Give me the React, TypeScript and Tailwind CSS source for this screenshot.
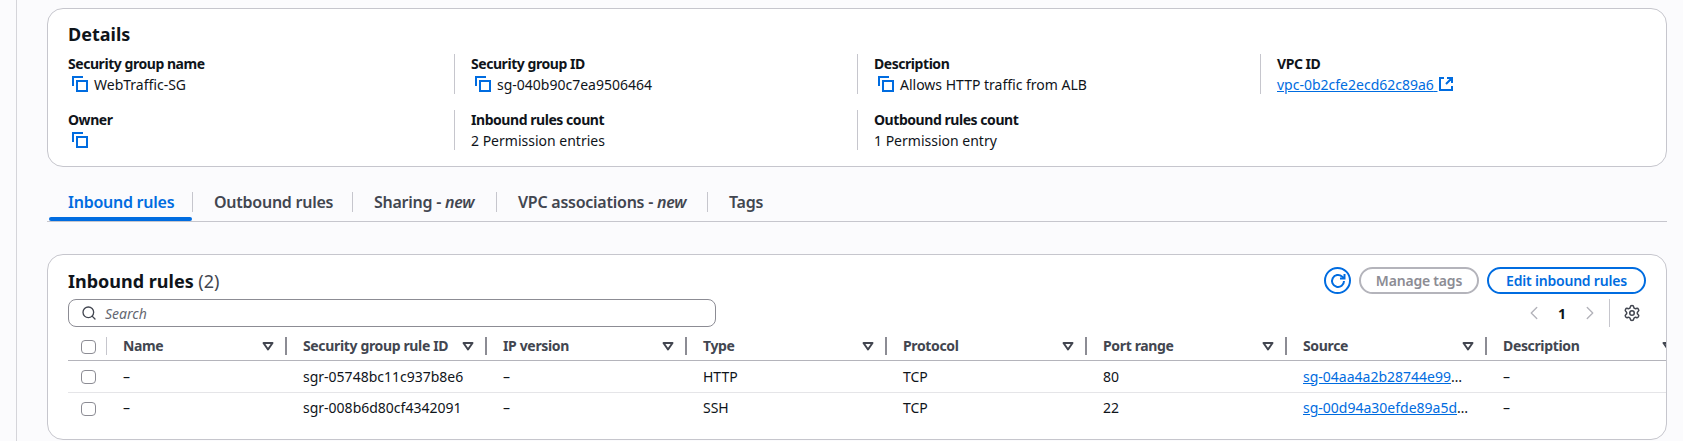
import { Search, Settings, ChevronLeft, ChevronRight } from "lucide-react";

const CopyIcon = () => (
  <svg viewBox="0 0 16 16" className="w-4 h-4 shrink-0" fill="none" stroke="#006ce0" strokeWidth="2">
    <path d="M1 10V1h10" />
    <rect x="5" y="5" width="10" height="10" />
  </svg>
);

const FilterIcon = () => (
  <svg viewBox="0 0 16 16" className="w-4 h-4 shrink-0" fill="none" stroke="#424650" strokeWidth="2" strokeLinejoin="round">
    <path d="M3.5 5h9L8 11.5z" />
  </svg>
);

const ExternalIcon = () => (
  <svg viewBox="0 0 16 16" className="w-4 h-4 shrink-0" fill="none" stroke="#006ce0" strokeWidth="2">
    <path d="M6 2H2v12h12v-4M9 2h5v5M14 2L8 8" />
  </svg>
);

const RefreshIcon = () => (
  <svg viewBox="0 0 16 16" className="w-4 h-4" fill="none" stroke="#006ce0" strokeWidth="2">
    <path d="M14 8a6 6 0 1 1-2-4.5L14 5" />
    <path d="M14.5 1v4.5H10" />
  </svg>
);

const Field = ({ label, value, copy, link, first }: { label: string; value?: string; copy?: boolean; link?: boolean; first?: boolean }) => (
  <div className={`h-10 ${first ? "" : "border-l border-[#c6c6cd] pl-4"}`}>
    <div className="font-bold leading-5 tracking-[-0.45px] text-[#0f141a]">{label}</div>
    <div className={`flex h-5 items-center ${copy ? "pl-1" : ""}`}>
      {copy && <CopyIcon />}
      {link ? (
        <>
          <a className="text-[#006ce0] underline">{value}&nbsp;</a>
          <ExternalIcon />
        </>
      ) : (
        <span className={copy ? "ml-1.5" : ""}>{value}</span>
      )}
    </div>
  </div>
);

const tabs = [
  { name: "Inbound rules", w: "w-[146px]", active: true },
  { name: "Outbound rules", w: "w-[160px]" },
  { name: "Sharing - ", extra: "new", w: "w-[144px]" },
  { name: "VPC associations - ", extra: "new", w: "w-[211px]" },
  { name: "Tags", w: "w-[80px]" },
];

const columns = ["Name", "Security group rule ID", "IP version", "Type", "Protocol", "Port range", "Source", "Description"];

const rows = [
  { id: "sgr-05748bc11c937b8e6", type: "HTTP", port: "80", source: "sg-04aa4a2b28744e99" },
  { id: "sgr-008b6d80cf4342091", type: "SSH", port: "22", source: "sg-00d94a30efde89a5d" },
];

const gridCols = "grid grid-cols-[39px_180px_200px_200px_200px_200px_200px_200px_200px]";

const Checkbox = () => <div className="h-[14px] w-[15px] rounded-[4px] border border-[#8c8c94] bg-white" />;

export default function App() {
  return (
    <div
      className="h-[441px] overflow-hidden bg-[#fbfbfd] pl-4 text-[14px] text-[#0f141a]"
      style={{ fontFamily: '"Noto Sans", sans-serif' }}
    >
      <div className="h-full border-l border-[#d5d5da] pl-[30px] pr-4 pt-2">
        {/* details card */}
        <div className="h-[159px] rounded-2xl border border-[#c6c6cd] bg-white pl-5 pt-[14px]">
          <h2 className="h-[31px] text-[18px] font-bold leading-[22px]">Details</h2>
          <div className="grid grid-cols-[386px_403px_403px_1fr] gap-y-4">
            <Field label="Security group name" value="WebTraffic-SG" copy first />
            <Field label="Security group ID" value="sg-040b90c7ea9506464" copy />
            <Field label="Description" value="Allows HTTP traffic from ALB" copy />
            <Field label="VPC ID" value="vpc-0b2cfe2ecd62c89a6" link />
            <Field label="Owner" copy first />
            <Field label="Inbound rules count" value="2 Permission entries" />
            <Field label="Outbound rules count" value="1 Permission entry" />
          </div>
        </div>

        {/* tabs */}
        <div className="mt-[22px] flex h-[33px] border-b border-[#c6c6cd]">
          {tabs.map((t) => (
            <div key={t.name} className={`relative h-[32px] ${t.w} pl-[21px] pt-[3px]`}>
              <div
                className={`flex h-5 items-center whitespace-pre text-[16px] font-semibold tracking-[-0.25px] ${t.active ? "text-[#006ce0]" : "text-[#424650]"}`}
              >
                {t.name}
                {t.extra && <em className="font-semibold">{t.extra}</em>}
              </div>
              {t.name !== "Tags" && <div className="absolute right-0 top-[3px] h-5 w-px bg-[#c6c6cd]" />}
              {t.active && <div className="absolute bottom-0 left-0.5 right-px h-1 rounded-full bg-[#006ce0]" />}
            </div>
          ))}
        </div>

        {/* rules table */}
        <div className="mt-[32px] h-[186px] overflow-hidden rounded-2xl border border-[#c6c6cd] bg-white pl-5 pt-3">
          <div className="flex h-[27px] items-center justify-between pr-5">
            <h2 className="pt-px text-[18px] font-bold">
              Inbound rules <span className="font-normal text-[#424650]">(2)</span>
            </h2>
            <div className="flex items-center">
              <button className="flex h-[27px] w-[27px] items-center justify-center rounded-full border-2 border-[#006ce0]">
                <RefreshIcon />
              </button>
              <button className="ml-2 h-[27px] w-[120px] rounded-full border-2 border-[#b4b4bb] text-[14px] font-semibold tracking-[-0.2px] text-[#8c8c94]">
                Manage tags
              </button>
              <button className="ml-2 h-[27px] w-[159px] rounded-full border-2 border-[#006ce0] text-[14px] font-semibold tracking-[-0.2px] text-[#006ce0]">
                Edit inbound rules
              </button>
            </div>
          </div>

          <div className="mt-[5px] flex h-7 items-center justify-between">
            <div className="flex h-7 w-[648px] items-center rounded-lg border border-[#8c8c94] pl-3">
              <Search size={16} className="text-[#424650]" />
              <span className="ml-2 text-[14px] italic text-[#656871]">Search</span>
            </div>
            <div className="flex h-7 items-center">
              <ChevronLeft size={22} strokeWidth={1.5} className="text-[#b4b4bb]" />
              <span className="ml-[10px] w-[14px] text-center font-bold">1</span>
              <ChevronRight size={22} strokeWidth={1.5} className="ml-[10px] text-[#b4b4bb]" />
              <div className="ml-[8px] h-7 w-px bg-[#c6c6cd]" />
              <Settings size={18} strokeWidth={2} className="ml-[13px] mr-[25px] text-[#424650]" />
            </div>
          </div>

          <div className={`mt-[5px] h-[29px] w-[1619px] border-b border-[#b4b4bb] ${gridCols}`}>
            <div className="relative pl-[13px] pt-[8px]">
              <Checkbox />
              <div className="absolute right-0 top-[5px] h-[18px] w-px bg-[#c6c6cd]" />
            </div>
            {columns.map((c) => (
              <div key={c} className="relative flex h-7 items-center pb-0.5 pl-4 font-bold tracking-[-0.35px] text-[#424650]">
                {c}
                <div className="absolute right-[11px] top-[6px]">
                  <FilterIcon />
                </div>
                <div className="absolute right-0 top-[5px] h-[18px] w-0.5 bg-[#8c8c94]" />
              </div>
            ))}
          </div>

          {rows.map((r, i) => (
            <div
              key={r.id}
              className={`w-[1619px] items-center ${gridCols} ${i === 0 ? "h-8 border-b border-[#e5e5e8] pt-px" : "h-[31px]"}`}
            >
              <div className="pl-[13px]">
                <Checkbox />
              </div>
              <div className="pb-0.5 pl-4">–</div>
              <div className="pb-0.5 pl-4">{r.id}</div>
              <div className="pb-0.5 pl-4">–</div>
              <div className="pb-0.5 pl-4">{r.type}</div>
              <div className="pb-0.5 pl-4">TCP</div>
              <div className="pb-0.5 pl-4">{r.port}</div>
              <div className="pb-0.5 pl-4">
                <a className="text-[#006ce0] underline">{r.source}</a>…
              </div>
              <div className="pb-0.5 pl-4">–</div>
            </div>
          ))}
        </div>
      </div>
    </div>
  );
}
